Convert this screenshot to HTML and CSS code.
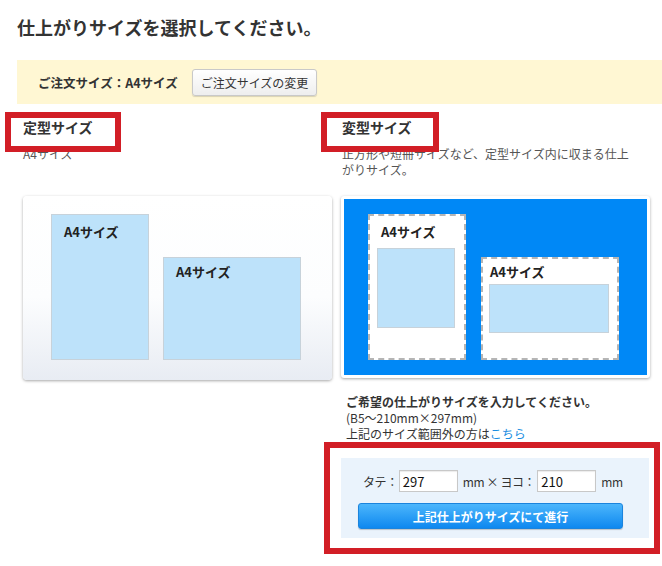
FILE: index.html
```html
<!DOCTYPE html>
<html lang="ja">
<head>
<meta charset="utf-8">
<title>仕上がりサイズ選択</title>
<link rel="stylesheet" href="styles.css">
</head>
<body>
<div class="page">
  <h1 class="title">仕上がりサイズを選択してください。</h1>
  <div class="banner">
    <span class="banner-text">ご注文サイズ：A4サイズ</span>
    <button class="btn-change" type="button">ご注文サイズの変更</button>
  </div>

  <div class="cols">
    <div class="col-head">
      <h2 class="col-title">定型サイズ<span class="mark mark-left"></span></h2>
    </div>
    <div class="col-head">
      <h2 class="col-title">変型サイズ<span class="mark mark-right"></span></h2>
    </div>

    <p class="desc">A4サイズ</p>
    <p class="desc desc-wide">正方形や短冊サイズなど、定型サイズ内に収まる仕上がりサイズ。</p>

    <div class="card card-std">
      <div class="sheet sheet-tall"><span class="sheet-label">A4サイズ</span></div>
      <div class="sheet sheet-wide"><span class="sheet-label">A4サイズ</span></div>
    </div>
    <div class="card card-var">
      <div class="frame frame-tall">
        <span class="frame-label">A4サイズ</span>
        <div class="inner inner-tall"></div>
      </div>
      <div class="frame frame-wide">
        <span class="frame-label">A4サイズ</span>
        <div class="inner inner-wide"></div>
      </div>
    </div>

    <div class="empty"></div>
    <div class="custom">
      <p class="custom-lead">ご希望の仕上がりサイズを入力してください。</p>
      <p class="custom-note">(B5〜210mm×297mm)</p>
      <p class="custom-note">上記のサイズ範囲外の方は<a class="link" href="#">こちら</a></p>

      <div class="form-panel">
        <span class="mark mark-form"></span>
        <div class="form-row">
          <span class="lbl">タテ：</span>
          <input class="num" type="text" value="297">
          <span class="lbl lbl-mid">mm × ヨコ：</span>
          <input class="num" type="text" value="210">
          <span class="lbl lbl-end">mm</span>
        </div>
        <button class="btn-go" type="button">上記仕上がりサイズにて進行</button>
      </div>
    </div>
  </div>
</div>
</body>
</html>
```

FILE: styles.css
```css
* { box-sizing: border-box; }

html, body {
  margin: 0;
  padding: 0;
  background: #fff;
}

body {
  font-family: "Noto Sans CJK JP", "Noto Sans", "Liberation Sans", sans-serif;
  color: #333;
  font-size: 12px;
}

.page {
  padding: 16px 0 20px 0;
  width: 662px;
  min-height: 566px;
}

.title {
  margin: 0 0 0 17px;
  font-size: 18px;
  line-height: 22px;
  font-weight: bold;
  color: #333;
}

.banner {
  margin: 22px 0 0 17px;
  height: 44px;
  background: #fff7d3;
  display: flex;
  align-items: center;
  padding-left: 21px;
  gap: 14px;
}

.banner-text {
  font-size: 12.5px;
  font-weight: bold;
  color: #333;
}

.btn-change {
  font-family: inherit;
  font-size: 12px;
  color: #333;
  height: 27px;
  padding: 0 8px;
  border: 1px solid #c9c9c9;
  border-radius: 3px;
  background: linear-gradient(#ffffff, #eeeeee);
  box-shadow: 0 1px 1px rgba(0,0,0,0.15);
}

.cols {
  display: grid;
  grid-template-columns: 309px 309px;
  column-gap: 9px;
  margin: 13px 0 0 23px;
}

.col-head { position: relative; }

.col-title {
  position: relative;
  margin: 0;
  font-size: 14px;
  line-height: 20px;
  font-weight: bold;
  color: #333;
  display: inline-block;
}

.col-head:nth-child(2) .col-title { margin-left: 1px; }

.mark {
  position: absolute;
  z-index: 5;
  border: 6px solid #d21e26;
  pointer-events: none;
}

.mark-left {
  left: -18px;
  top: -5px;
  width: 116px;
  height: 40px;
}

.mark-right {
  left: -21px;
  top: -5px;
  width: 118px;
  height: 40px;
}

.desc {
  margin: 9px 0 0 0;
  font-size: 12px;
  line-height: 16px;
  color: #555;
}

.desc-wide {
  padding-left: 1px;
  width: 298px;
}

.card {
  margin-top: 18px;
  height: 184px;
  display: flex;
  align-items: flex-end;
}

.card-std {
  border-radius: 4px;
  background: linear-gradient(#ffffff 0%, #fcfdfe 55%, #e8ecf3 100%);
  box-shadow: 0 1px 3px rgba(0,0,0,0.35);
  padding: 0 0 20px 28px;
  gap: 14px;
}

.sheet {
  background: #bde2fa;
  border: 1px solid #c7d2da;
  padding: 8px 0 0 12px;
}

.sheet-tall { width: 98px; height: 146px; }
.sheet-wide { width: 138px; height: 103px; padding-top: 5px; }

.sheet-label, .frame-label {
  display: block;
  font-size: 13px;
  line-height: 18px;
  font-weight: bold;
  color: #222;
}

.card-var {
  height: 182px;
  border: 3px solid #fff;
  border-radius: 3px;
  background: #0088f6;
  box-shadow: 0 1px 3px rgba(0,0,0,0.35);
  padding: 0 0 15px 24px;
  gap: 15px;
}

.frame {
  background: #fff;
  border: 2px dashed #b5b5b5;
  display: flex;
  flex-direction: column;
}

.frame-tall {
  width: 98px;
  height: 146px;
  padding: 7px 0 0 7px;
}

.frame-tall .frame-label { margin-left: 4px; }

.frame-wide {
  width: 138px;
  height: 103px;
  padding: 4px 0 0 6px;
}

.frame-wide .frame-label { margin-left: 1px; }

.inner {
  background: #bde2fa;
  border: 1px solid #c7d2da;
}

.inner-tall { width: 78px; height: 80px; margin-top: 7px; }
.inner-wide { width: 120px; height: 49px; margin-top: 3px; }

.custom {
  margin-top: 14px;
}

.custom p {
  margin: 0;
  padding-left: 5px;
  line-height: 16px;
  font-size: 12px;
  color: #333;
}

.custom-lead { font-weight: bold; }

.link {
  color: #1a8ee2;
  text-decoration: none;
}

.form-panel {
  position: relative;
  margin-top: 16px;
  width: 308px;
  height: 80px;
  background: #eaf3fc;
  padding-top: 12px;
}

.mark-form {
  left: -17px;
  top: -16px;
  right: -11px;
  bottom: -16px;
}

.form-row {
  display: flex;
  align-items: center;
  padding-left: 22px;
  height: 22px;
}

.lbl {
  font-size: 12px;
  color: #333;
  white-space: nowrap;
  letter-spacing: -0.4px;
}

.lbl-mid { margin: 0 1px 0 5px; }
.lbl-end { margin-left: 5px; }

.num {
  width: 59px;
  height: 22px;
  margin-left: 1px;
  font-family: inherit;
  font-size: 13px;
  color: #111;
  padding: 0 3px;
  border: 1px solid #c8c8c8;
  background: #fff;
  box-shadow: inset 0 1px 1px rgba(0,0,0,0.08);
}

.btn-go {
  display: block;
  margin: 11px 0 0 17px;
  width: 265px;
  height: 26px;
  font-family: inherit;
  font-size: 12px;
  font-weight: bold;
  color: #fff;
  border: 1px solid #1b84dd;
  border-radius: 3px;
  background: linear-gradient(#4cb6fc, #0e88f0);
  box-shadow: 0 1px 1px rgba(0,0,0,0.2);
}
```
